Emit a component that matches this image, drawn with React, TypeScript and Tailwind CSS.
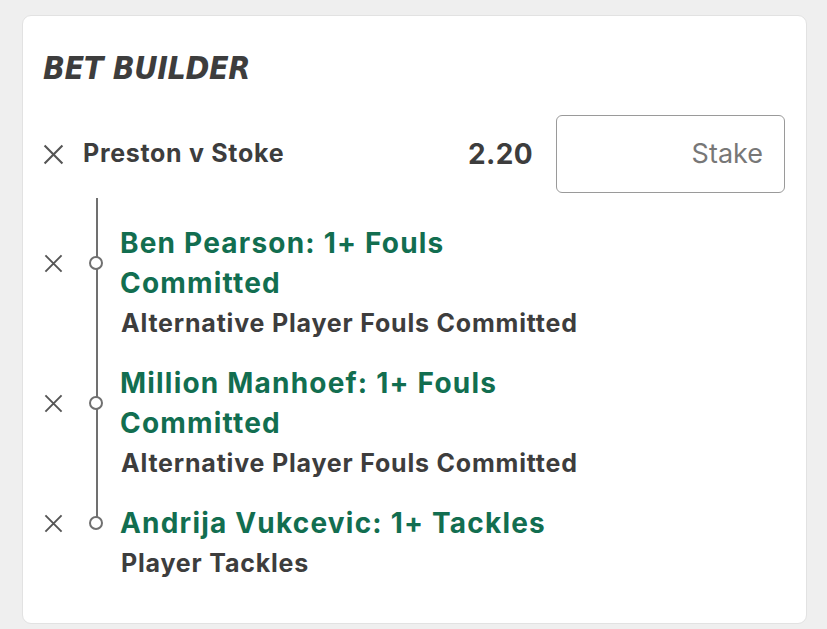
import React from 'react';

interface Selection {
    id: string;
    title: string;
    market: string;
}

const SELECTIONS: Selection[] = [
    { id: 's1', title: 'Ben Pearson: 1+ Fouls Committed', market: 'Alternative Player Fouls Committed' },
    { id: 's2', title: 'Million Manhoef: 1+ Fouls Committed', market: 'Alternative Player Fouls Committed' },
    { id: 's3', title: 'Andrija Vukcevic: 1+ Tackles', market: 'Player Tackles' },
];

const CloseIcon = ({ size = 20 }: { size?: number }) => (
    <svg width={size} height={size} viewBox="0 0 20 20" className="shrink-0">
        <path d="M1.5 1.5 L18.5 18.5 M18.5 1.5 L1.5 18.5" stroke="#555" strokeWidth="2" fill="none" />
    </svg>
);

export default function App() {
    return (
        <div className="min-h-[629px] bg-[#efefef] px-[22px] pt-[15px] pb-[7px] font-['Inter','Liberation_Sans',sans-serif]">
            <div className="w-[785px] bg-white rounded-[9px] border border-[#e2e2e2] pl-[20px] pr-[21px] pt-[34px] pb-[40px]">
                {/* Header */}
                <h1 className="font-['DejaVu_Sans_Condensed','DejaVu_Sans',sans-serif] italic font-bold text-[32px] leading-[36px] text-[#3d3d3d] tracking-[-0.4px]">
                    BET BUILDER
                </h1>

                {/* Event row */}
                <div className="mt-[29px] flex items-center h-[78px]">
                    <CloseIcon size={21} />
                    <span className="ml-[19px] flex-1 text-[25px] font-bold tracking-[0.7px] text-[#3d3d3d]">Preston v Stoke</span>
                    <span className="text-[28px] font-bold tracking-[0.4px] text-[#3d3d3d] mr-[23px]">2.20</span>
                    <div className="w-[229px] h-[78px] border border-[#9a9a9a] rounded-[6px] flex items-center justify-end pr-[21px]">
                        <span className="text-[27px] text-[#777]">Stake</span>
                    </div>
                </div>

                {/* Legs */}
                <div className="relative mt-[30px] flex flex-col gap-[20px]">
                    <div className="absolute left-[53px] top-[-25px] bottom-[60px] w-[2px] bg-[#707070]" />
                    {SELECTIONS.map(sel => (
                        <div key={sel.id} className="flex flex-col">
                            <div className="flex items-center">
                                <div className="ml-[1px]">
                                    <CloseIcon size={19} />
                                </div>
                                <div className="relative ml-[26px] w-[14px] h-[14px] rounded-full border-2 border-[#707070] bg-white shrink-0" />
                                <p className="ml-[17px] max-w-[460px] text-[28px] leading-[40px] font-bold tracking-[1.2px] text-[#126e50]">
                                    {sel.title}
                                </p>
                            </div>
                            <p className="pl-[78px] text-[25px] leading-[40px] font-bold tracking-[0.8px] text-[#3d3d3d]">
                                {sel.market}
                            </p>
                        </div>
                    ))}
                </div>
            </div>
        </div>
    );
}
